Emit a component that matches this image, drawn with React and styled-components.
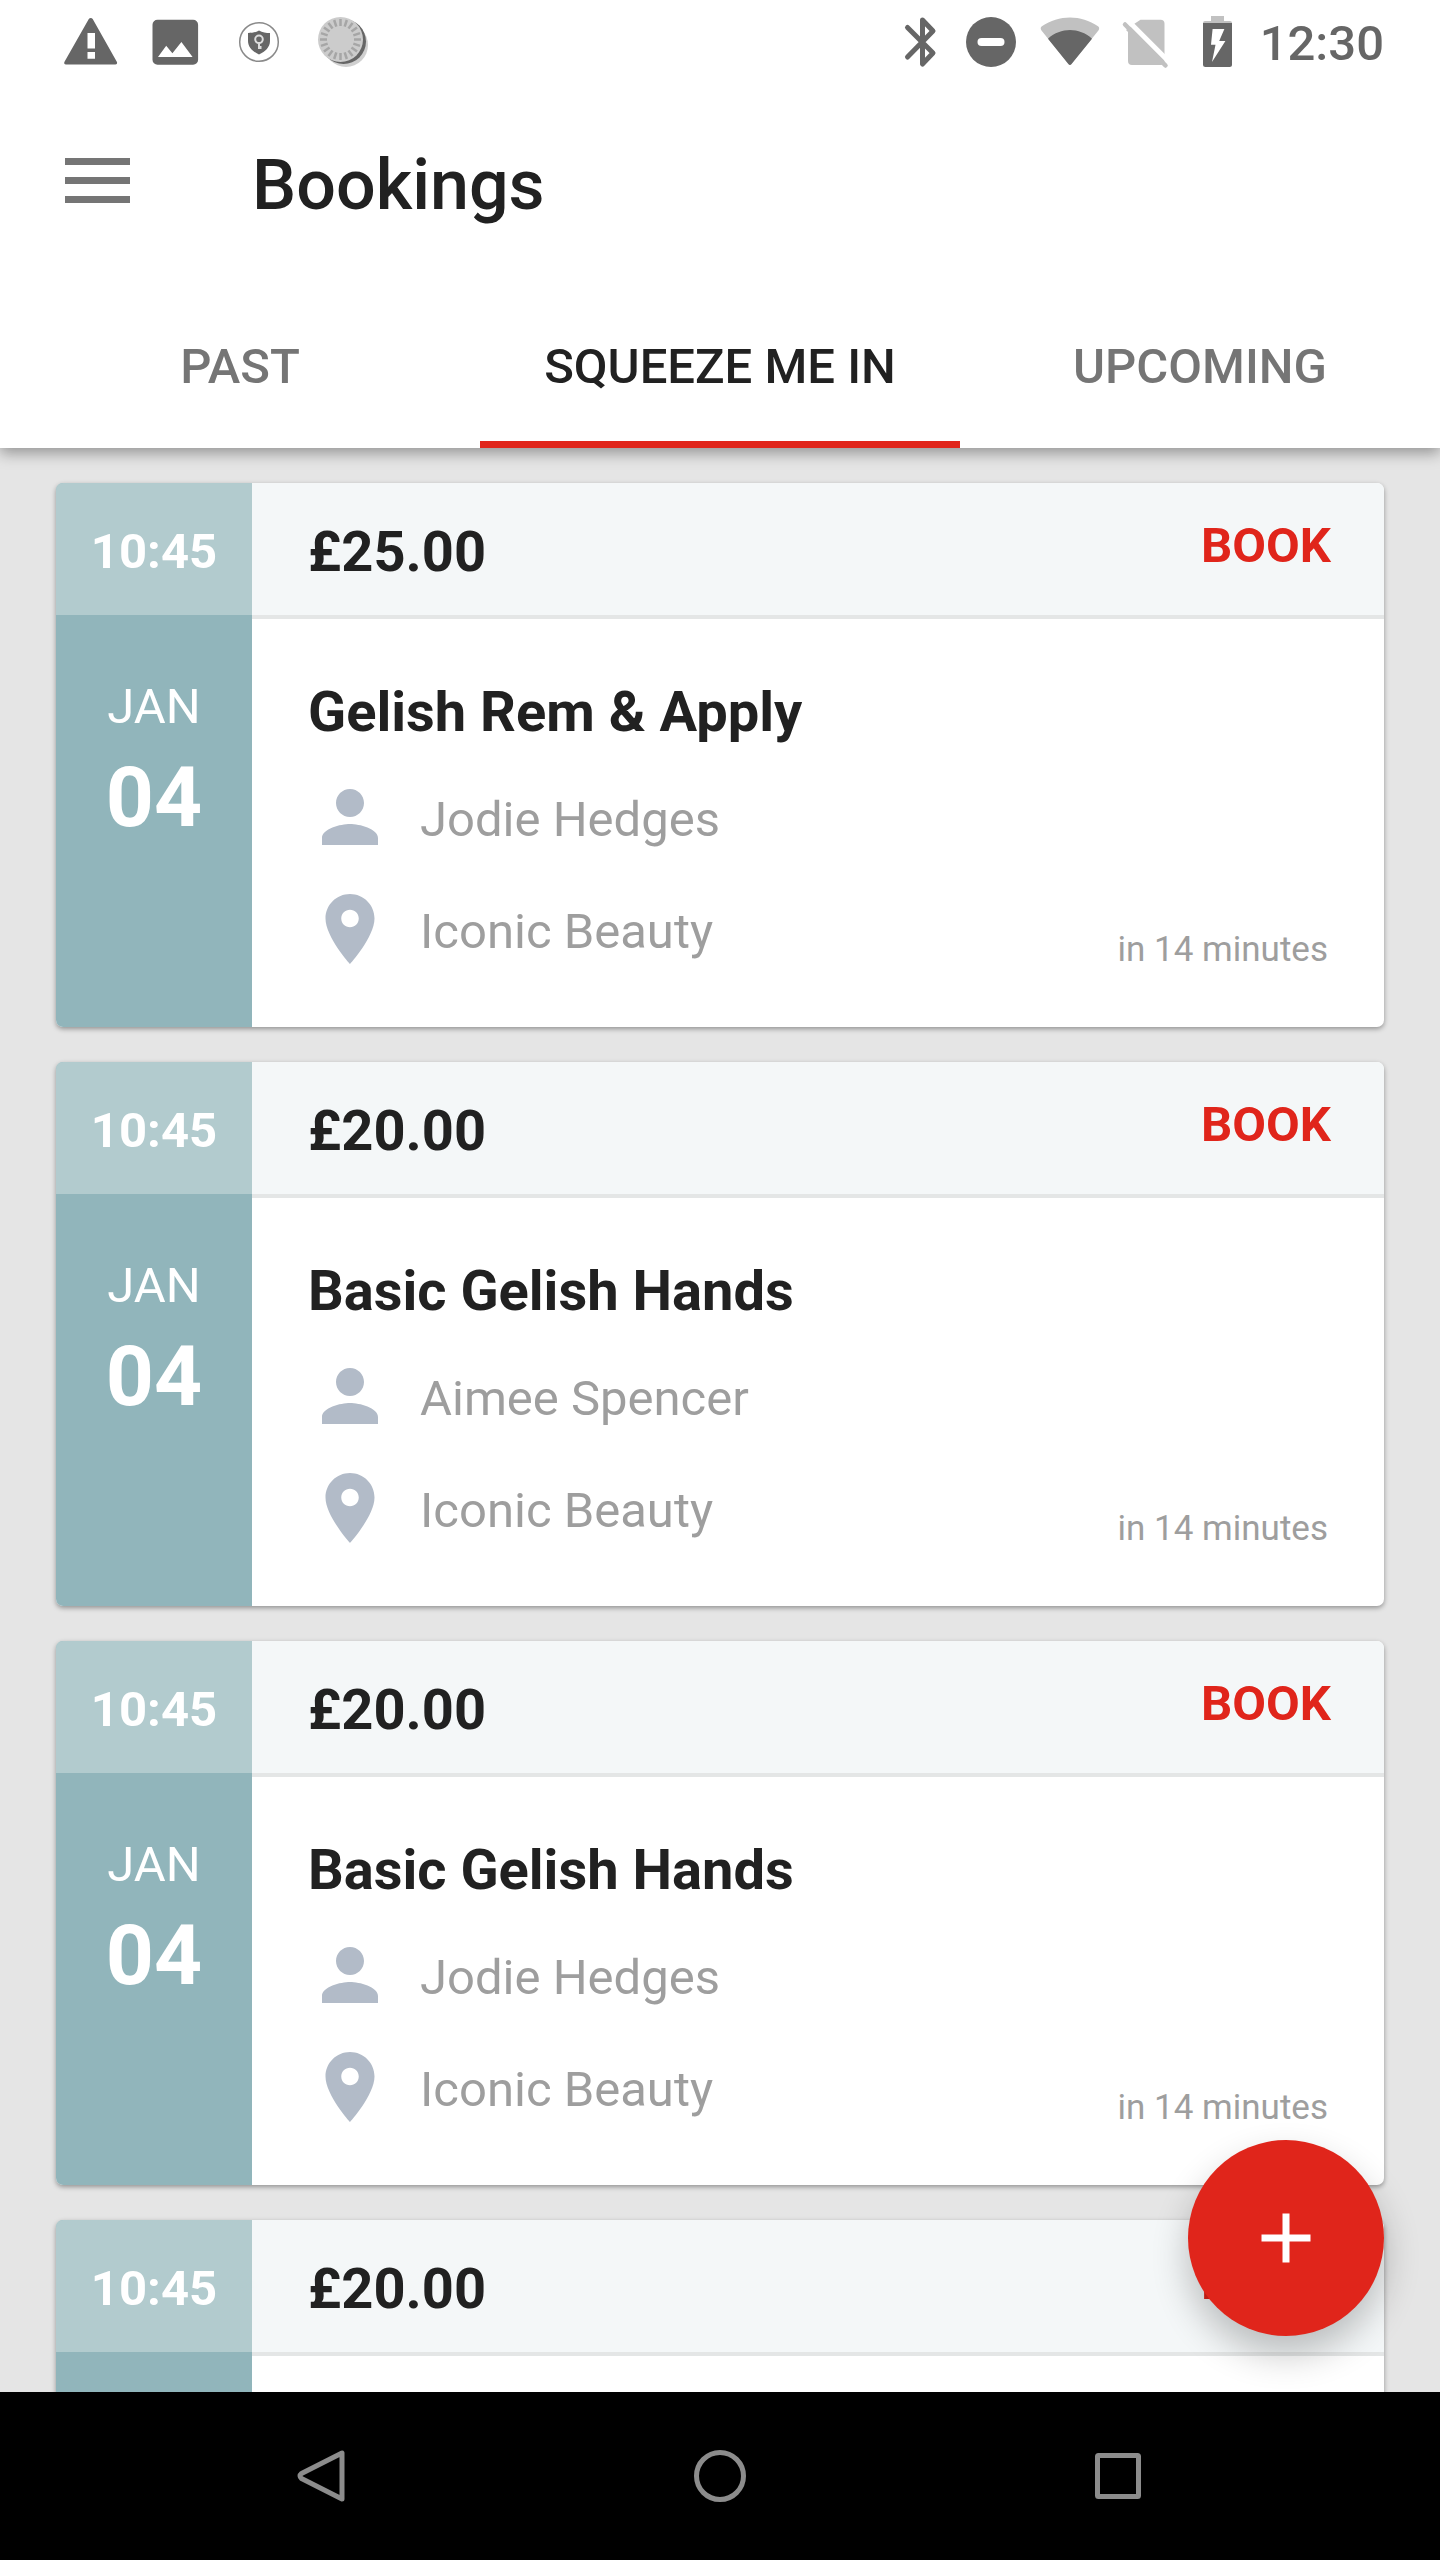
import React, { useState } from "react";
import styled, { createGlobalStyle } from "styled-components";

const tabs = ["Past", "Squeeze me in", "Upcoming"];

const bookings = [
  { id: 1, time: "10:45", month: "Jan", day: "04", price: "£25.00", title: "Gelish Rem & Apply", person: "Jodie Hedges", place: "Iconic Beauty", due: "in 14 minutes" },
  { id: 2, time: "10:45", month: "Jan", day: "04", price: "£20.00", title: "Basic Gelish Hands", person: "Aimee Spencer", place: "Iconic Beauty", due: "in 14 minutes" },
  { id: 3, time: "10:45", month: "Jan", day: "04", price: "£20.00", title: "Basic Gelish Hands", person: "Jodie Hedges", place: "Iconic Beauty", due: "in 14 minutes" },
  { id: 4, time: "10:45", month: "Jan", day: "04", price: "£20.00", title: "Basic Gelish Hands", person: "Aimee Spencer", place: "Iconic Beauty", due: "in 14 minutes" },
];

const ticks = Array.from({ length: 20 }, (_, i) => i * 18);

const StatusIcons = () => (
  <>
    <StatusGroup>
      <StatusIcon $width={84} viewBox="0 0 84 84">
        <path
          fillRule="evenodd"
          d="M17 64.500c-1.500 0-2.300-1.500-1.500-2.800L39.800 19c.9-1.500 3-1.500 3.900 0L67.800 61.700c.8 1.300 0 2.800-1.500 2.800zM38.500 33v15.500h7.500V33zM38.500 52v6.800h7.500V52z"
        />
      </StatusIcon>
      <StatusIcon $width={84} viewBox="0 0 84 84">
        <path
          fillRule="evenodd"
          d="M24.500 19.700h35.600a5 5 0 0 1 5 5v35a5 5 0 0 1-5 5H24.500a5 5 0 0 1-5-5v-35a5 5 0 0 1 5-5zM25 57h34.600L48.400 42l-9 11.300-6.200-7.600z"
        />
      </StatusIcon>
      <StatusIcon $width={84} viewBox="0 0 84 84">
        <circle cx="42" cy="42" r="19.300" fill="#fff" stroke="#8a8a8a" strokeWidth="1.500" />
        <path d="M42 30.500c3.500 2 7 2.500 11 2.500v8c0 6-4.500 10.500-11 13.500-6.500-3-11-7.500-11-13.500v-8c4 0 7.500-.5 11-2.500z" />
        <circle cx="42" cy="39.300" r="3.800" fill="none" stroke="#ddd" strokeWidth="2" />
        <path d="M42 43.500v5.500M43.500 46v3" stroke="#ddd" strokeWidth="2" />
      </StatusIcon>
      <StatusIcon $width={84} viewBox="0 0 84 84">
        <circle cx="45" cy="45" r="22" fill="#d0d0d0" />
        <circle cx="42.500" cy="41.500" r="22.500" />
        <circle cx="39.500" cy="39.500" r="22.500" fill="#ccc" />
        {ticks.map((angle) => (
          <path
            key={angle}
            d="M39.500 19v7"
            stroke="#a6a6a6"
            strokeWidth="2.500"
            transform={`rotate(${angle} 39.500 39.500)`}
          />
        ))}
      </StatusIcon>
    </StatusGroup>
    <StatusGroup>
      <StatusIcon $width={70} viewBox="0 0 70 84">
        <path
          d="M21.500 27.500L47 53L36.500 64V20L47 31L21.500 57"
          fill="none"
          stroke="#666"
          strokeWidth="5"
          strokeLinecap="round"
          strokeLinejoin="round"
        />
      </StatusIcon>
      <StatusIcon $width={70} viewBox="0 0 70 84">
        <circle cx="35" cy="42" r="25" />
        <rect x="21.500" y="38" width="27" height="8" rx="4" fill="#fff" />
      </StatusIcon>
      <StatusIcon $width={88} viewBox="0 0 88 84">
        <path
          d="M15.300 30.200c-1-1.400-.7-3 .6-3.900C33 14.500 55 14.500 72 26.300c1.300.9 1.600 2.500.6 3.900L45.300 64.200c-.8 1-1.900 1-2.700 0z"
          fill="#c1c1c1"
        />
        <path d="M22 38.700c13-11.500 31-11.500 44 0L45.300 64.200c-.8 1-1.900 1-2.700 0z" />
      </StatusIcon>
      <StatusIcon $width={64} viewBox="0 0 64 84">
        <path
          d="M26.500 19.700H46.500a4 4 0 0 1 4 4V61a4 4 0 0 1-4 4H18a4 4 0 0 1-4-4V32l-2-2 8-6z"
          fill="#c1c1c1"
        />
        <path d="M10 16.800L56 62.800" stroke="#fff" strokeWidth="5" />
        <path d="M11 24.500L51.500 65.500" stroke="#c1c1c1" strokeWidth="4.500" strokeLinecap="round" />
      </StatusIcon>
      <StatusIcon $width={82} viewBox="0 0 82 84">
        <path d="M33 16h13v5h6a2 2 0 0 1 2 2H25a2 2 0 0 1 2-2h6z" fill="#c1c1c1" />
        <path d="M25 23h29v41.500a2.500 2.500 0 0 1-2.500 2.500h-24a2.500 2.500 0 0 1-2.500-2.500z" />
        <path d="M34.600 29h11.800l-5.200 12h6.200L34 62l3.500-17.300H33z" fill="#fff" />
      </StatusIcon>
      <Clock>12:30</Clock>
    </StatusGroup>
  </>
);

const BookingCard = ({ booking }) => (
  <Card>
    <DateColumn>
      <Time>{booking.time}</Time>
      <Month>{booking.month}</Month>
      <Day>{booking.day}</Day>
    </DateColumn>
    <Details>
      <CardHead>
        <Price>{booking.price}</Price>
        <BookButton type="button">Book</BookButton>
      </CardHead>
      <CardBody>
        <Treatment>{booking.title}</Treatment>
        <InfoRow>
          <InfoIcon viewBox="0 0 24 24">
            <path d="M12 12c2.210 0 4-1.790 4-4s-1.790-4-4-4-4 1.790-4 4 1.790 4 4 4zm0 2c-2.670 0-8 1.340-8 4v2h16v-2c0-2.660-5.330-4-8-4z" />
          </InfoIcon>
          <InfoText>{booking.person}</InfoText>
        </InfoRow>
        <InfoRow>
          <InfoIcon viewBox="0 0 24 24">
            <path d="M12 2C8.130 2 5 5.130 5 9c0 5.250 7 13 7 13s7-7.750 7-13c0-3.870-3.130-7-7-7zm0 9.500c-1.380 0-2.500-1.120-2.500-2.500s1.120-2.500 2.500-2.500 2.500 1.120 2.500 2.500-1.120 2.500-2.500 2.500z" />
          </InfoIcon>
          <InfoText>{booking.place}</InfoText>
          <Due>{booking.due}</Due>
        </InfoRow>
      </CardBody>
    </Details>
  </Card>
);

const App = () => {
  const [activeTab, setActiveTab] = useState("Squeeze me in");

  return (
    <Screen>
      <GlobalStyle />
      <Header>
        <StatusBar>
          <StatusIcons />
        </StatusBar>
        <Toolbar>
          <MenuButton type="button" aria-label="Menu">
            <svg width="65" height="45" viewBox="0 0 65 45" fill="#757575">
              <path d="M0 0h65v7H0zM0 19h65v7H0zM0 38h65v7H0z" />
            </svg>
          </MenuButton>
          <PageTitle>Bookings</PageTitle>
        </Toolbar>
        <TabBar>
          {tabs.map((tab) => (
            <Tab
              key={tab}
              type="button"
              $active={tab === activeTab}
              onClick={() => setActiveTab(tab)}
            >
              {tab}
            </Tab>
          ))}
        </TabBar>
      </Header>
      <Content>
        <List>
          {bookings.map((booking) => (
            <BookingCard key={booking.id} booking={booking} />
          ))}
        </List>
        <AddButton type="button" aria-label="Add booking">
          <svg width="84" height="84" viewBox="0 0 24 24" fill="#fff">
            <path d="M19 13h-6v6h-2v-6H5v-2h6V5h2v6h6v2z" />
          </svg>
        </AddButton>
      </Content>
      <NavBar>
        <NavButton type="button" aria-label="Back">
          <svg width="56" height="56" viewBox="0 0 56 56">
            <path d="M48 5v46L7.500 30.500q-3-2.500 0-5z" />
          </svg>
        </NavButton>
        <NavButton type="button" aria-label="Home">
          <svg width="56" height="56" viewBox="0 0 56 56">
            <circle cx="28" cy="28" r="23.500" />
          </svg>
        </NavButton>
        <NavButton type="button" aria-label="Recent apps">
          <svg width="56" height="56" viewBox="0 0 56 56">
            <rect x="7.500" y="7.500" width="41" height="41" rx="1" />
          </svg>
        </NavButton>
      </NavBar>
    </Screen>
  );
};

const GlobalStyle = createGlobalStyle`
  * {
    box-sizing: border-box;
  }

  body {
    margin: 0;
    font-family: Roboto, sans-serif;
    color: #212121;
    background-color: #e5e5e5;
  }

  button {
    padding: 0;
    border: none;
    background: none;
    font-family: inherit;
    cursor: pointer;
  }

  svg {
    display: block;
  }
`;

const Screen = styled.div`
  display: flex;
  flex-direction: column;
  height: 100vh;
`;

const Header = styled.header`
  position: relative;
  z-index: 1;
  background-color: #fff;
  box-shadow: 0 5px 14px rgba(0, 0, 0, 0.36);
`;

const StatusBar = styled.div`
  display: flex;
  justify-content: space-between;
  padding: 0 56px 0 49px;
`;

const StatusGroup = styled.div`
  display: flex;
  align-items: center;
`;

const StatusIcon = styled.svg`
  width: ${({ $width }) => $width}px;
  height: 84px;
  fill: #666;
`;

const Clock = styled.span`
  padding-top: 4px;
  font-size: 49px;
  font-weight: 500;
  line-height: 56px;
  color: #666;
`;

const Toolbar = styled.div`
  display: flex;
  align-items: center;
  height: 196px;
  padding-left: 65px;
`;

const MenuButton = styled.button`
  width: 187px;
  padding-bottom: 4px;
`;

const PageTitle = styled.h1`
  margin: 0;
  padding-top: 6px;
  font-size: 70px;
  font-weight: 500;
  line-height: 84px;
`;

const TabBar = styled.nav`
  display: flex;
`;

const Tab = styled.button`
  flex: 1;
  height: 168px;
  padding-top: 12px;
  border-bottom: 7px solid ${({ $active }) => ($active ? "#e0251b" : "transparent")};
  font-size: 49px;
  font-weight: 500;
  line-height: 56px;
  text-transform: uppercase;
  color: ${({ $active }) => ($active ? "#212121" : "#757575")};
`;

const Content = styled.main`
  position: relative;
  flex: 1;
  min-height: 0;
`;

const List = styled.div`
  display: flex;
  flex-direction: column;
  gap: 35px;
  height: 100%;
  padding: 35px 56px;
  overflow-y: auto;
  scrollbar-width: none;
`;

const Card = styled.article`
  display: flex;
  flex-shrink: 0;
  border-radius: 7px;
  overflow: hidden;
  background-color: #fff;
  box-shadow: 0 2px 5px rgba(0, 0, 0, 0.36);
`;

const DateColumn = styled.div`
  width: 196px;
  text-align: center;
  color: #fff;
  background-color: #91b5bb;
`;

const Time = styled.div`
  height: 132px;
  padding-top: 41px;
  font-size: 49px;
  font-weight: 700;
  line-height: 56px;
  background-color: #b2cbce;
`;

const Month = styled.div`
  padding-top: 64px;
  font-size: 49px;
  line-height: 56px;
  text-transform: uppercase;
`;

const Day = styled.div`
  font-size: 84px;
  font-weight: 700;
  line-height: 126px;
`;

const Details = styled.div`
  flex: 1;
`;

const CardHead = styled.div`
  display: flex;
  justify-content: space-between;
  align-items: flex-start;
  height: 136px;
  padding: 35px 53px 0 56px;
  border-bottom: 4px solid #e4e6e6;
  background-color: #f4f7f8;
`;

const Price = styled.div`
  font-size: 56px;
  font-weight: 700;
  line-height: 68px;
`;

const BookButton = styled.button`
  font-size: 49px;
  font-weight: 700;
  line-height: 56px;
  text-transform: uppercase;
  color: #e0251b;
`;

const CardBody = styled.div`
  display: flex;
  flex-direction: column;
  gap: 28px;
  padding: 60px 56px 56px;
`;

const Treatment = styled.h2`
  margin: 0;
  padding-bottom: 2px;
  font-size: 56px;
  font-weight: 700;
  line-height: 66px;
`;

const InfoRow = styled.div`
  display: flex;
  align-items: center;
  gap: 28px;
  color: #9e9e9e;
`;

const InfoIcon = styled.svg`
  width: 84px;
  height: 84px;
  fill: #b2bbc8;
`;

const InfoText = styled.span`
  padding-top: 6px;
  font-size: 49px;
  line-height: 56px;
`;

const Due = styled.span`
  align-self: flex-end;
  margin-left: auto;
  font-size: 35px;
  line-height: 42px;
`;

const AddButton = styled.button`
  position: absolute;
  right: 56px;
  bottom: 56px;
  display: flex;
  justify-content: center;
  align-items: center;
  width: 196px;
  height: 196px;
  border-radius: 50%;
  background-color: #e0251b;
  box-shadow: 0 18px 36px rgba(0, 0, 0, 0.24);
`;

const NavBar = styled.footer`
  position: relative;
  display: flex;
  height: 168px;
  padding: 0 123px;
  background-color: #000;
`;

const NavButton = styled.button`
  display: flex;
  flex: 1;
  justify-content: center;
  align-items: center;

  svg {
    fill: none;
    stroke: #8c8c8c;
    stroke-width: 5;
    stroke-linejoin: round;
  }
`;

export default App;
